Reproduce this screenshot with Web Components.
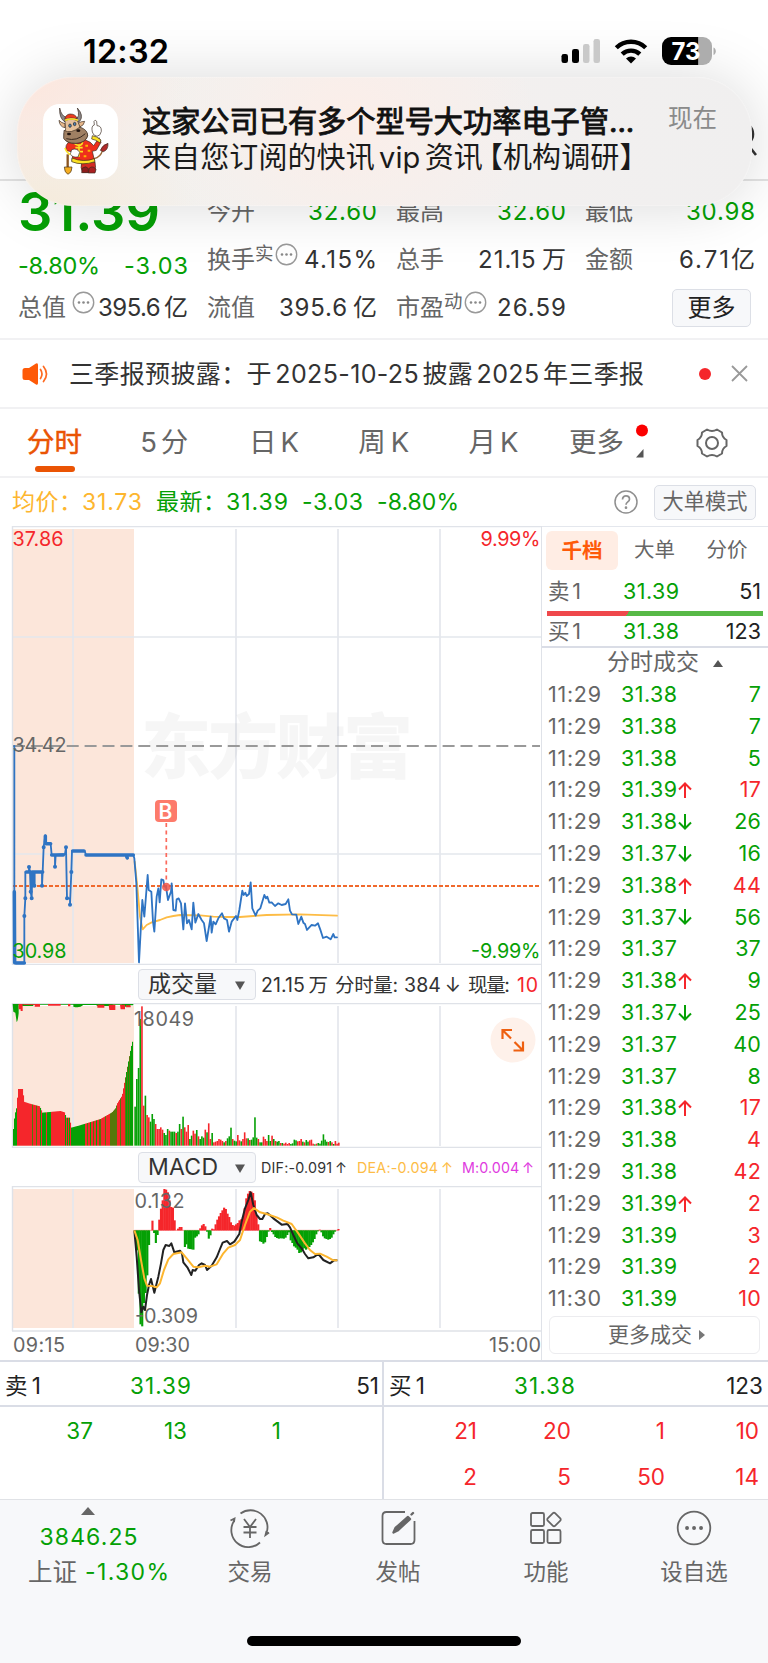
<!DOCTYPE html>
<html lang="zh-CN">
<head>
<meta charset="utf-8">
<title>分时行情</title>
<style>
  body {
    margin: 0;
    width: 768px;
    height: 1663px;
    overflow: hidden;
    background: #fff;
    color: #333;
    font-family: Inter, "Noto Sans CJK SC", sans-serif;
    line-height: 1.2;
    position: relative;
    --up: #f5262b;
    --down: #05a005;
    --gray: #666;
    --brand: #ea5404;
    --line: #e4e7ed;
  }
  .body { display: flex; height: 834px; }
  .tight { margin-left: -9px; }
</style>
</head>
<body>
  <status-bar></status-bar>
  <push-banner>
    <span slot="title">这家公司已有多个型号大功率电子管...</span>
    <span slot="text">来自您订阅的快讯 vip 资讯<span class="tight">【机构调研】</span></span>
    <span slot="time">现在</span>
  </push-banner>
  <title-bar></title-bar>
  <quote-header></quote-header>
  <notice-bar>三季报预披露：于 2025-10-25 披露 2025 年三季报</notice-bar>
  <period-tabs></period-tabs>
  <chart-legend></chart-legend>
  <div class="body">
    <chart-panel></chart-panel>
    <side-panel></side-panel>
  </div>
  <order-queue></order-queue>
  <bottom-nav></bottom-nav>

<script>
// texto que se ajusta a un ancho fijo con letter-spacing
class FitText extends HTMLElement {
  constructor() {
    super();
    this.attachShadow({ mode: 'open' });
  }

  connectedCallback() {
    const w = Number(this.getAttribute('w'));
    this.shadowRoot.innerHTML = `
      <style>
        :host { display: inline-block; width: ${w}px; white-space: nowrap; line-height: 1.2; flex: none; word-spacing: -.1em; }
        span { display: inline-block; }
      </style>
      <span><slot></slot></span>
    `;
    const span = this.shadowRoot.querySelector('span');
    const n = this.textContent.length;
    const extra = (w - span.getBoundingClientRect().width) / Math.max(1, n - 1);
    span.style.letterSpacing = extra.toFixed(3) + 'px';
    span.style.marginRight = (-extra).toFixed(3) + 'px';
  }
}
customElements.define('fit-text', FitText);

class StatusBar extends HTMLElement {
  constructor() {
    super();
    this.attachShadow({ mode: 'open' });
    this.shadowRoot.innerHTML = `
      <style>
        :host { display: flex; justify-content: space-between; align-items: center; height: 77px; padding: 25px 52px 0 83px; box-sizing: border-box; position: relative; z-index: 3; }
        fit-text { font-size: 32.5px; font-weight: 600; color: #000; }
        svg { display: block; }
      </style>
      <fit-text w="86">12:32</fit-text>
      <svg width="155" height="30" viewBox="561 36 155 30">
        <rect x="561.5" y="54" width="6.5" height="9" rx="2.3"/>
        <rect x="572" y="49" width="7" height="14" rx="2.3"/>
        <rect x="583" y="44" width="6.5" height="19" rx="2.3" fill="#c9c9c9"/>
        <rect x="593.5" y="39" width="6.5" height="24" rx="2.3" fill="#c9c9c9"/>
        <g fill="none" stroke="#000" stroke-width="4.4">
          <path d="M616.3 47.8a21 21 0 0 1 29.4 0"/>
          <path d="M622.2 54.2a12.7 12.7 0 0 1 17.6 0"/>
        </g>
        <path d="M626 58.4a7.2 7.2 0 0 1 10 0l-5 5z"/>
        <path d="M671 37h27.5v28H671a9 9 0 0 1-9-9V46a9 9 0 0 1 9-9z"/>
        <path d="M698.500 37H703a9 9 0 0 1 9 9v10a9 9 0 0 1-9 9h-4.500z" fill="#adadad"/>
        <path d="M713.500 47.500c3 1.200 3 6 0 7.500z" fill="#adadad"/>
        <text x="671.500" y="60" font-size="24" font-weight="700" fill="#fff" textLength="29" lengthAdjust="spacingAndGlyphs">73</text>
      </svg>
    `;
  }
}
customElements.define('status-bar', StatusBar);

class PushBanner extends HTMLElement {
  constructor() {
    super();
    this.attachShadow({ mode: 'open' });
    this.shadowRoot.innerHTML = `
      <style>
        :host {
          position: absolute; z-index: 2; left: 17px; top: 77px; width: 735px; height: 129px;
          box-sizing: border-box; padding: 27px 35px 0 26px; border-radius: 56px;
          display: flex; align-items: flex-start;
          background:
            radial-gradient(ellipse 170px 110px at 0 0, #fde6dd, #fde6dd00),
            radial-gradient(ellipse 150px 90px at 30px 129px, #f5ebdc, #f5ebdc00),
            radial-gradient(ellipse 190px 160px at 330px 40px, #fbeee9, #fbeee900),
            linear-gradient(90deg, #f5efea, #f2f1ef 30%, #f3f0ef 60%, #f0efef);
          box-shadow: 0 0 60px rgba(0, 0, 0, .15), inset 0 0 1px 1px rgba(255, 255, 255, .25);
        }
        svg { display: block; flex: none; }
        .lines { flex: 1; margin-left: 24px; display: flex; flex-direction: column; white-space: nowrap; color: #1a1a1a; font-size: 29px; line-height: 36px; }
        .title { font-size: 29.200px; color: #111; -webkit-text-stroke: .9px #111; }
        .text { letter-spacing: .1px; word-spacing: -4px; }
        .time { color: #8a8a8a; font-size: 24.500px; line-height: 29px; }
      </style>
      <svg width="75" height="75" viewBox="0 0 225 225">
        <rect width="225" height="225" rx="50" fill="#fff"/>
        <g stroke="#3a2a20" stroke-width="2" stroke-linejoin="round">
          <path d="M153 164q20-4 26-26" fill="none" stroke="#9a6a3a" stroke-width="4"/>
          <path d="M172 139q6-16 23-21q1 20-14 25z" fill="#b22a2a"/>
          <path d="M116 176l40-2q4 16-1 31h-36q-8-14-3-29z" fill="#d42b22"/>
          <path d="M118 192q12-8 18 2v12h-20z" fill="#8f1d1d"/>
          <path d="M139 192q12-8 20 4l-3 11h-20z" fill="#a92020"/>
          <path d="M82 112q30-16 60 3l10 10 16-24 6 14-14 24-12 3 7 30q-36 12-68-1l3-27-19-4q-8-18 11-28z" fill="#ee2f1c"/>
          <path d="M87 162q34 14 67 2l2 9q-38 13-70 0z" fill="#fbe122"/>
          <path d="M148 95q12 1 26 13l-3 9q-12-10-25-12z" fill="#fbe122"/>
          <path d="M92 114l6 7q10 6 18 0l3-7M108 121v38M97 131h22M98 143h22" fill="none" stroke="#fbe122" stroke-width="5"/>
          <path d="M127 125h8M134 140h8M94 151h7M122 157h8" fill="none" stroke="#ffb400" stroke-width="6"/>
          <path d="M74 151v38" stroke="#8a5420" stroke-width="7"/>
          <path d="M64 189h23q0 17-12 22q-11-5-11-22z" fill="#f6ae21"/>
          <path d="M86 137q16-6 24 8l-5 14q-18 2-23-9z" fill="#fff"/>
          <path d="M66 132q6 16 16 19" fill="none" stroke="#fbe122" stroke-width="5"/>
          <path d="M148 84q-4-19 6-21l-1-11q3-7 8 0l1 13q14 0 13 17q-2 13-13 15q-12-2-14-13z" fill="#fff"/>
          <path d="M66 54q-18-11-16-42q5 24 20 28z" fill="#8a8788"/>
          <path d="M96 46q17-5 7-34q20 22 8 39l-11 7z" fill="#8a8788"/>
          <path d="M66 59q-10-2-18-10q2 20 18 22zM105 58q9-6 20-6q-2 13-15 17z" fill="#e7b88b"/>
          <path d="M66 50q20-9 38 1l8 21q20 7 22 22q-3 20-31 24q-29 3-39-13q-4-16 4-30z" fill="#e6c19b"/>
          <path d="M63 79q20 12 48-10q24 9 23 27q-7 20-35 22q-27 0-37-15z" fill="#a08063"/>
          <path d="M65 46q3-15 16-16q17 0 22 14q-20-5-38 2z" fill="#ec3b1e"/>
          <path d="M66 49q19-8 39 0" fill="none" stroke="#fbe122" stroke-width="5"/>
        </g>
        <g fill="#4d7fb2" stroke="#222" stroke-width="2"><ellipse cx="81" cy="65" rx="4" ry="5"/><ellipse cx="95" cy="60" rx="4" ry="5"/></g>
        <g fill="#221510"><ellipse cx="78" cy="90" rx="6" ry="4"/><ellipse cx="106" cy="80" rx="6" ry="4"/></g>
        <path d="M70 104q31 9 57-15" fill="none" stroke="#3a2a20" stroke-width="3"/>
      </svg>
      <div class="lines">
        <div class="title"><slot name="title"></slot></div>
        <div class="text"><slot name="text"></slot></div>
      </div>
      <div class="time"><slot name="time"></slot></div>
    `;
  }
}
customElements.define('push-banner', PushBanner);

// barra superior, casi toda queda debajo del aviso
class TitleBar extends HTMLElement {
  constructor() {
    super();
    this.attachShadow({ mode: 'open' });
    this.shadowRoot.innerHTML = `
      <style>
        :host { display: flex; justify-content: flex-end; box-sizing: border-box; height: 104px; padding: 42px 10px 0 0; border-bottom: 2px solid #e3e3e3; }
      </style>
      <svg width="32" height="40" viewBox="726 119 32 40" fill="none" stroke="#333" stroke-width="2.600">
        <circle cx="741.500" cy="134" r="11.500"/><path d="M748 145l8 10"/>
      </svg>
    `;
  }
}
customElements.define('title-bar', TitleBar);

const dots = `<svg width="23" height="23" viewBox="0 0 23 23"><circle cx="11.500" cy="11.500" r="10.200" fill="none" stroke="#999" stroke-width="1.400"/><g fill="#888"><circle cx="7" cy="11.500" r="1.300"/><circle cx="11.500" cy="11.500" r="1.300"/><circle cx="16" cy="11.500" r="1.300"/></g></svg>`;

class QuoteHeader extends HTMLElement {
  constructor() {
    super();
    this.attachShadow({ mode: 'open' });
    this.shadowRoot.innerHTML = `
      <style>
        :host { display: grid; grid-template-columns: repeat(4, 170px); column-gap: 19px; padding: 8px 13px 7px 18px; height: 159px; box-sizing: border-box; grid-template-rows: repeat(3, 47.600px); font-size: 24px; border-bottom: 2px solid #f1f1f3; }
        div { display: flex; justify-content: space-between; align-items: center; }
        label { color: var(--gray); display: flex; align-items: center; }
        sup { font-size: 18.500px; line-height: 18px; margin: -14px 0 0 0; }
        svg { margin: -11px 0 0 1.500px; }
        .down { color: var(--down); }
        .price { font-size: 54px; font-weight: 600; }
        .pct { padding-top: 12px; font-size: 23.500px; }
        button { width: 79px; height: 38px; margin: 0 4px 0 auto; border: 1.500px solid #dcdfe6; border-radius: 5px; background: #f7f8fa; color: #222; font: inherit; padding: 0; }
      </style>
      <div class="price down"><fit-text w="142">31.39</fit-text></div>
      <div><label>今开</label><fit-text class="down" w="69">32.60</fit-text></div>
      <div><label>最高</label><fit-text class="down" w="69">32.60</fit-text></div>
      <div><label>最低</label><fit-text class="down" w="69">30.98</fit-text></div>
      <div class="pct down"><fit-text w="82">-8.80%</fit-text><fit-text w="64">-3.03</fit-text></div>
      <div><label>换手<sup>实</sup>${dots}</label><fit-text w="73">4.15%</fit-text></div>
      <div><label>总手</label><fit-text w="88">21.15 万</fit-text></div>
      <div><label>金额</label><fit-text w="76">6.71亿</fit-text></div>
      <div><label>总值<span style="width:4px"></span>${dots}</label><fit-text w="90">395.6 亿</fit-text></div>
      <div><label>流值</label><fit-text w="98">395.6 亿</fit-text></div>
      <div><label>市盈<sup>动</sup>${dots}</label><fit-text w="69">26.59</fit-text></div>
      <div><button>更多</button></div>
    `;
  }
}
customElements.define('quote-header', QuoteHeader);

class NoticeBar extends HTMLElement {
  constructor() {
    super();
    this.attachShadow({ mode: 'open' });
  }

  connectedCallback() {
    this.shadowRoot.innerHTML = `
      <style>
        :host { display: flex; align-items: center; height: 69px; box-sizing: border-box; padding: 0 20px 0 22px; border-bottom: 2px solid #f1f1f3; font-size: 25px; }
        .horn { margin-right: 20px; }
        fit-text { word-spacing: -4px; }
        i { width: 12px; height: 12px; border-radius: 50%; background: #f5262b; margin: 0 20px 0 auto; }
      </style>
      <svg class="horn" width="27" height="24" viewBox="0 0 27 24">
        <path d="M3 6h4l7-4.500q2-1 2 1.500v18q0 2.500-2 1.500l-7-4.500H3q-2.500 0-2.500-2.500v-7Q.5 6 3 6z" fill="#fe5a08"/>
        <path d="M18.500 7.500q3 4.500 0 9M21.500 4.500q6 7.500 0 15" fill="none" stroke="#fe6a20" stroke-width="1.700" stroke-linecap="round"/>
      </svg>
      <fit-text w="575">${this.textContent}</fit-text>
      <i></i>
      <svg width="17" height="17" viewBox="0 0 17 17" stroke="#999" stroke-width="1.800"><path d="M1 1l15 15M16 1L1 16"/></svg>
    `;
  }
}
customElements.define('notice-bar', NoticeBar);

class PeriodTabs extends HTMLElement {
  constructor() {
    super();
    this.attachShadow({ mode: 'open' });
    this.shadowRoot.innerHTML = `
      <style>
        :host { display: grid; grid-template-columns: repeat(5, 109.800px) 109px 109px; height: 69px; box-sizing: border-box; border-bottom: 2px solid #f1f1f3; font-size: 27.500px; color: var(--gray); }
        div { display: flex; align-items: center; justify-content: center; position: relative; padding-right: 1px; }
        .on { color: var(--brand); -webkit-text-stroke: .5px var(--brand); }
        .on::after { content: ""; position: absolute; left: 35px; top: 57px; width: 40px; height: 6px; border-radius: 3px; background: var(--brand); }
        .more { padding-right: 14px; }
        .more svg { position: absolute; left: 85px; top: 14px; }
      </style>
      <div class="on">分时</div>
      <div><fit-text w="48">5 分</fit-text></div>
      <div><fit-text w="50">日 K</fit-text></div>
      <div><fit-text w="51">周 K</fit-text></div>
      <div><fit-text w="50">月 K</fit-text></div>
      <div class="more">更多<svg width="16" height="36" viewBox="0 0 16 36"><circle cx="8" cy="7.500" r="6" fill="#fb0000"/><path d="M9.500 26v8.500H2z" fill="#555"/></svg></div>
      <div><svg width="34" height="32" viewBox="0 0 34 32" fill="none" stroke="#666" stroke-width="2">
        <path stroke-linejoin="round" d="M12 2.500Q17 5.500 22 2.500L27 5.500Q27 10.500 31.500 13V19Q27 21.500 27 26.500L22 29.500Q17 26.500 12 29.500L7 26.500Q7 21.500 2.500 19V13Q7 10.500 7 5.500Z"/><circle cx="17" cy="16" r="6"/>
      </svg></div>
    `;
  }
}
customElements.define('period-tabs', PeriodTabs);

class ChartLegend extends HTMLElement {
  constructor() {
    super();
    this.attachShadow({ mode: 'open' });
    this.shadowRoot.innerHTML = `
      <style>
        :host { display: flex; align-items: center; height: 48px; padding: 0 12px; font-size: 23px; color: var(--down); }
        .avg { color: #fdb62f; margin-right: 14px; }
        .avg, .v { display: flex; }
        fit-text { padding-top: 2px; }
        .g { margin-left: 14px; }
        svg { margin: 0 16px 0 auto; }
        button { width: 102px; height: 35px; border: 1.500px solid #dcdfe6; border-radius: 5px; background: #f7f8fa; color: var(--gray); font: inherit; font-size: 21.200px; padding: 0; }
      </style>
      <span class="avg"><fit-text w="70">均价：</fit-text><fit-text w="60">31.73</fit-text></span>
      <fit-text w="70">最新：</fit-text><fit-text w="62">31.39</fit-text>
      <fit-text class="g" w="61">-3.03</fit-text><fit-text class="g" w="82">-8.80%</fit-text>
      <svg width="24" height="24" viewBox="0 0 24 24" fill="none" stroke="#8f8f8f" stroke-width="1.500"><circle cx="12" cy="12" r="11"/><path d="M8.500 9.500c0-5 7-4.500 7-.3 0 2.800-3.500 2.600-3.500 5.500" stroke-width="1.700"/><circle cx="12" cy="17.700" r=".6" fill="#8f8f8f"/></svg>
      <button>大单模式</button>
    `;
  }
}
customElements.define('chart-legend', ChartLegend);

// las series estan en tercios de pixel
const price = '43,18 43,455 45,668 73,668 73,528 76,475 76,396 87,396 87,380 90,396 92,455 95,475 97,396 100,437 104,437 104,396 126,396 126,437 128,396 131,320 136,286 138,312 152,312 155,345 165,345 165,380 167,345 195,342 198,322 201,475 210,475 210,494 214,396 216,333 254,333 258,345 400,345 403,355 409,430 417,667 427,480 433,530 443,405 446,450 454,455 459,545 463,575 470,470 475,445 479,487 484,418 490,420 493,440 498,440 504,480 513,455 515,430 520,510 527,512 530,478 536,475 543,490 550,568 555,490 561,550 567,540 575,568 580,488 586,548 595,522 605,540 612,550 620,603 632,530 635,578 640,545 647,553 655,535 666,520 672,535 681,540 687,575 695,545 708,528 712,540 718,510 727,452 731,465 736,458 740,468 747,462 752,427 757,505 767,527 773,512 781,505 793,465 798,475 802,470 808,488 815,487 825,498 835,490 845,495 857,492 865,478 870,512 876,523 889,524 895,552 904,530 910,548 915,552 921,570 935,555 945,557 954,550 962,572 969,594 980,590 992,598 1000,582 1004,592 1011,592';
const average = '404,365 412,440 420,530 428,568 440,555 455,547 480,540 500,532 520,528 540,525 600,526 640,530 680,531 720,531 760,528 800,525 900,523 1011,527';
const dif = '403,241 410,320 417,420 424,487 430,470 435,480 441,435 447,405 453,387 463,428 475,380 483,340 490,300 497,285 508,288 514,280 523,307 540,302 546,310 550,337 562,352 574,375 578,360 586,362 597,345 605,340 615,345 621,360 635,347 650,322 660,297 668,278 681,273 690,283 703,275 718,252 725,215 735,175 745,150 752,127 760,165 770,195 780,207 787,207 795,192 803,190 820,205 845,224 862,222 870,232 880,255 892,280 905,295 915,312 925,325 940,322 955,312 970,330 990,340 1002,331 1012,331';
const dea = '403,241 413,270 423,330 433,385 441,407 455,408 470,412 480,400 492,360 505,328 520,312 545,307 560,325 580,350 595,352 615,347 630,350 650,343 670,310 685,293 705,285 720,270 735,225 750,185 762,174 780,187 800,192 830,202 850,212 875,222 895,250 915,280 930,300 945,312 960,311 980,320 1000,331 1012,331';
// r = sube, g = baja
const volumes = 'g117 g200 g233 g380 r418 r120 g150 r92 r85 g72 g95 g80 r65 r50 r50 r55 r48 g38 g32 g50 r45 g42 g42 g42 r38 g42 g65 r50 g87 r55 r42 r62 g20 g30 r45 r36 g47 r28 g20 g28 g24 r48 g40 r67 r20 g38 r10 r12 r14 r20 r18 r14 g10 r14 g22 g28 g54 r20 g15 g13 r32 r16 g13 r20 r40 r22 g22 r17 g18 g25 g85 g24 r20 g10 g10 r27 r20 r14 g32 g14 r30 g20 r14 g12 g14 r8 g8 r6 r9 r5 r8 g5 g7 g18 g16 r13 r14 r20 g12 r10 g17 g12 r16 r18 r6 g4 r6 g8 g6 g15 g34 g18 g12 r11 g14 r10 g5 r14 r6 r9';
const macd = [-8,-60,-190,-282,-288,-218,-188,-135,-44,0,29,-8,-38,-14,32,65,90,124,122,114,90,70,68,30,0,5,10,10,0,-50,-42,-55,-56,-57,-58,-22,-18,-12,6,15,19,12,-4,-25,-15,5,3,18,32,42,52,60,68,64,50,40,24,16,14,18,22,30,33,40,66,96,110,118,116,112,90,45,18,-33,-35,-40,-36,-20,-4,7,-5,-12,-20,-23,-25,-24,-24,-25,-22,-14,-6,-30,-38,-48,-52,-58,-68,-66,-58,-54,-58,-54,-50,-44,-36,-26,-12,-3,2,-6,-18,-24,-26,-28,-26,-22,-12,-4,0,4];
const auction = [[39,50],[43,92],[50,120],[52,168],[54,170],[68,170],[70,132],[88,126],[118,118],[126,99],[180,104],[192,100],[198,84],[208,84],[212,54],[235,60],[300,80],[335,100],[345,112],[350,126],[365,150],[375,205],[385,258],[392,295],[398,320]];

function heightAt(points, x) {
  for (let i = 1; i < points.length; i++) {
    const [x0, h0] = points[i - 1];
    const [x1, h1] = points[i];
    if (x <= x1) return h0 + (h1 - h0) * (x - x0) / (x1 - x0);
  }
  return points[points.length - 1][1];
}

function auctionBars() {
  const red = '#f5262b', green = '#05a005', olive = '#55780a';
  let out = '';
  for (let x = 39; x < 399; x += 3) {
    const k = (x / 3) | 0;
    let c = red;
    if (x < 51 || x > 390) c = green;
    else if (x > 93 && x < 99 || x > 105 && x < 109) c = olive;
    else if (x >= 120 && x < 156) c = k % 5 === 1 ? red : green;
    else if (x > 194 && x < 212) c = k % 2 ? green : red;
    else if (x >= 212 && x < 250) c = green;
    else if (x >= 250 && x < 300) c = k % 6 === 0 ? green : k % 6 === 3 ? olive : red;
    else if (x >= 330 && x < 350) c = olive;
    else if (x >= 300 && x < 375) c = k % 5 === 0 ? olive : red;
    else if (x >= 375) c = k % 2 ? olive : green;
    const h = heightAt(auction, x);
    out += `<rect x="${x}" y="${(557 - h).toFixed(1)}" width="3.2" height="${h.toFixed(1)}" fill="${c}"/>`;
  }
  return out;
}

function volumeBars() {
  return volumes.split(' ').map((v, i) => {
    const h = Number(v.slice(1));
    const x = 403 + i * 5.135;
    return `<rect x="${x.toFixed(1)}" y="${557 - h}" width="4.8" height="${h}" fill="${v[0] === 'r' ? '#f5262b' : '#05a005'}"/>`;
  }).join('');
}

function macdBars() {
  return macd.map((v, i) => {
    const x = 403 + i * 5.12;
    return `<rect x="${x.toFixed(1)}" y="${v > 0 ? 241 - v : 241}" width="6.4" height="${Math.abs(v)}" fill="${v > 0 ? '#f5262b' : '#05a005'}"/>`;
  }).join('');
}

class ChartPanel extends HTMLElement {
  constructor() {
    super();
    this.attachShadow({ mode: 'open' });
    const grid = (y1, y2) => `
      <rect x="13" y="${y1}" width="121" height="${y2 - y1}" fill="#fce6da"/>
      <path d="M73 ${y1}V${y2}M236 ${y1}V${y2}M338 ${y1}V${y2}M440 ${y1}V${y2}" stroke="#e4e7ed" stroke-width="1.700"/>`;
    this.shadowRoot.innerHTML = `
      <style>
        :host { display: flex; flex-direction: column; width: 541px; flex: none; }
        svg { display: block; flex: none; font-family: Inter, sans-serif; }
        .bar { display: flex; align-items: center; box-sizing: border-box; padding-left: 138px; font-size: 19.500px; }
        .bar > fit-text { padding-top: 3px; }
        .axis { flex: 1; display: flex; align-items: center; box-sizing: border-box; padding: 0 0 0 13px; font-size: 19.800px; color: var(--gray); }
        .sel { box-sizing: border-box; width: 118px; height: 31px; flex: none; border: 1.500px solid #dcdfe6; border-radius: 4px; background: #f7f8fa; font-size: 23px; display: flex; align-items: center; justify-content: space-between; padding: 2px 10px 0 9px; margin-right: 5px; }
        .small { font-size: 14.300px; padding-top: 1px; }
      </style>
      <svg width="541" height="439" viewBox="0 526 541 439">
        ${grid(529, 963)}
        <path d="M13 637H541M13 854H541" stroke="#e4e7ed" stroke-width="1.700"/>
        <path d="M12.500 965V526.500H541M12 964.500H541" fill="none" stroke="#e0e3e9" stroke-width="1.400"/>
        <text x="141" y="773" font-size="70" font-weight="900" fill="#808080" fill-opacity=".07" textLength="272" style="font-family:'Noto Sans CJK SC',sans-serif">东方财富</text>
        <path d="M13 746H540" stroke="#999" stroke-width="2" stroke-dasharray="12 5.900"/>
        <path d="M13 886H541" stroke="#f0692c" stroke-width="2" stroke-dasharray="4 2"/>
        <g transform="translate(0 740) scale(.33333)" fill="none" stroke-linejoin="round" stroke-linecap="round">
          <polyline points="${average}" stroke="#fdbc45" stroke-width="5.500"/>
          <polyline points="${price}" stroke="#2f74c3" stroke-width="5.500"/>
          <path d="M43 455L44 668M47 669H73M79 396H92M97 396H128M98 400V437M136 288V306M138 311H152M155 345H190M218 333H252M258 345H400M380 350L382 354" stroke="#2f74c3" stroke-width="10.500"/>
          <path d="M73 528h.1M76 475h.1M87 381h.1M92 455h.1M95 475h.1M103 437h.1M126 437h.1M131 322h.1M165 380h.1M198 322h.1M201 475h.1M210 494h.1M214 396h.1" stroke="#2f74c3" stroke-width="12"/>
        </g>
        <path d="M166.300 823V882" stroke="#fb6a5c" stroke-width="1.700" stroke-dasharray="4 3.500"/>
        <circle cx="166.300" cy="887" r="4.300" fill="#f05347" fill-opacity=".85"/>
        <rect x="155" y="800" width="22" height="22" rx="4" fill="#fd7b6b"/>
        <text x="158.500" y="819" font-size="21" font-weight="600" fill="#fff">B</text>
        <g font-size="19.800">
          <text x="12.500" y="546" fill="#f5262b" textLength="51">37.86</text>
          <text x="480.500" y="546" fill="#f5262b" textLength="60">9.99%</text>
          <text x="12.500" y="751.500" fill="#666" textLength="54">34.42</text>
          <text x="12.500" y="957.500" fill="#05a005" textLength="54">30.98</text>
          <text x="471" y="957.500" fill="#05a005" textLength="69.500">-9.99%</text>
        </g>
      </svg>
      <div class="bar" style="height:38px">
        <div class="sel"><fit-text w="69">成交量</fit-text><svg width="10" height="9"><path d="M0 .5h10L5 9z" fill="#555"/></svg></div>
        <fit-text w="67">21.15 万</fit-text><fit-text w="63" style="margin-left:7px">分时量:</fit-text><fit-text w="57" style="margin-left:6px">384 ↓</fit-text><fit-text w="42" style="margin-left:7px">现量:</fit-text><fit-text w="21" style="margin-left:7px;color:var(--up)">10</fit-text>
      </div>
      <svg width="541" height="145" viewBox="0 1003 541 145">
        ${grid(1006, 1146)}
        <path d="M12.500 1148V1003.500H541M12 1147.500H541" fill="none" stroke="#dfe2e8" stroke-width="1.400"/>
        <g transform="translate(0 960) scale(.33333)">
          ${auctionBars()}
          ${volumeBars()}
          <path d="M38 132H400V136H390V140H365V134H338V138H290V135H250Q238 146 220 140V134H100V138H66V134H56V160Q53 186 50 186L46 158L40 155Z" fill="#05a005"/>
          <path d="M56 132H68V153H62V148H56ZM70 132H120V140H104V134H70ZM144 132H182V137H144ZM204 132H211V139H204ZM292 134H313V143H292ZM326 134H346V150H328ZM360 134H375V148H362ZM378 136H392V142H378Z" fill="#f5262b"/>
        </g>
        <text x="134" y="1025.500" font-size="19.800" fill="#666" textLength="60">18049</text>
        <circle cx="513" cy="1040" r="22.500" fill="#fef1ea"/>
        <path d="M502.500 1039V1030H512M503 1030.500L511 1038.500M523 1041.500V1050.500H513.500M522.500 1050L514.500 1042" fill="none" stroke="#ee6010" stroke-width="2.200"/>
      </svg>
      <div class="bar" style="height:38px">
        <div class="sel"><fit-text w="70">MACD</fit-text><svg width="10" height="9"><path d="M0 .5h10L5 9z" fill="#555"/></svg></div>
        <span class="small"><fit-text w="86">DIF:-0.091 ↑</fit-text><fit-text w="96" style="margin-left:10px;color:#fdbc45">DEA:-0.094 ↑</fit-text><fit-text w="72" style="margin-left:9px;color:#e03ae0">M:0.004 ↑</fit-text></span>
      </div>
      <svg width="541" height="146" viewBox="0 1186 541 146">
        ${grid(1189, 1328)}
        <path d="M12.500 1331V1186.500H541M12 1331H541" fill="none" stroke="#dfe2e8" stroke-width="1.400"/>
        <g transform="translate(0 1150) scale(.33333)" fill="none" stroke-linejoin="round">
          <path d="M403 241H1016" stroke="#f5262b" stroke-width="1.500"/>
          ${macdBars()}
        </g>
        <g font-size="19.800" fill="#666">
          <text x="134.500" y="1208" textLength="50">0.132</text>
          <text x="135" y="1322.500" textLength="63">-0.309</text>
        </g>
        <g transform="translate(0 1150) scale(.33333)" fill="none" stroke-linejoin="round">
          <polyline points="${dif}" stroke="#222" stroke-width="6"/>
          <polyline points="${dea}" stroke="#fdb62f" stroke-width="6"/>
        </g>
      </svg>
      <div class="axis"><fit-text w="52">09:15</fit-text><fit-text w="55" style="margin-left:70px">09:30</fit-text><fit-text w="52" style="margin-left:auto">15:00</fit-text></div>
    `;
  }
}
customElements.define('chart-panel', ChartPanel);

class SidePanel extends HTMLElement {
  constructor() {
    super();
    this.attachShadow({ mode: 'open' });
    // hora, precio, flecha, cantidad, color
    const trades = [
      ['11:29', '31.38', '', 7, 'down'], ['11:29', '31.38', '', 7, 'down'],
      ['11:29', '31.38', '', 5, 'down'], ['11:29', '31.39', '↑', 17, 'up'],
      ['11:29', '31.38', '↓', 26, 'down'], ['11:29', '31.37', '↓', 16, 'down'],
      ['11:29', '31.38', '↑', 44, 'up'], ['11:29', '31.37', '↓', 56, 'down'],
      ['11:29', '31.37', '', 37, 'down'], ['11:29', '31.38', '↑', 9, 'down'],
      ['11:29', '31.37', '↓', 25, 'down'], ['11:29', '31.37', '', 40, 'down'],
      ['11:29', '31.37', '', 8, 'down'], ['11:29', '31.38', '↑', 17, 'up'],
      ['11:29', '31.38', '', 4, 'up'], ['11:29', '31.38', '', 42, 'up'],
      ['11:29', '31.39', '↑', 2, 'up'], ['11:29', '31.39', '', 3, 'up'],
      ['11:29', '31.39', '', 2, 'up'], ['11:30', '31.39', '', 10, 'up']
    ];
    const arrow = a => a === '↑'
      ? '<svg width="14" height="16" viewBox="0 0 14 16" stroke="#f5262b"><path d="M7 16V2M1 7.500L7 1.500L13 7.500"/></svg>'
      : a ? '<svg width="14" height="16" viewBox="0 0 14 16" stroke="#05a005"><path d="M7 0V14M1 8.500L7 14.500L13 8.500"/></svg>' : '';
    this.shadowRoot.innerHTML = `
      <style>
        :host { flex: 1; min-width: 0; display: flex; flex-direction: column; box-sizing: border-box; border-left: 1.500px solid #dfe2e8; font-size: 21.500px; color: var(--gray); }
        .tabs { display: grid; grid-template-columns: 72px 73px 72px; align-items: center; justify-items: center; height: 48px; padding-left: 4px; font-size: 20.500px; border-top: 1px solid var(--line); box-sizing: border-box; }
        .tabs b { width: 72px; height: 39px; line-height: 39px; text-align: center; border-radius: 6px; background: #ffede4; color: #fe5a08; }
        .row { display: grid; grid-template-columns: 75px 1fr auto; align-items: center; padding: 0 7px 0 6px; height: 36.500px; box-sizing: border-box; }
        .buy { height: 30px; padding-top: 3px; }
        .qty { color: #222; }
        .down { color: var(--down); }
        .up { color: var(--up); }
        .ratio { height: 5px; margin: 0 5px 0 5px; background: linear-gradient(120deg, #ef484b 37.500%, #57b947 37.500%); }
        .title { display: flex; align-items: center; justify-content: center; gap: 14px; height: 33.500px; border-top: 2px solid #dadde6; box-sizing: border-box; font-size: 23px; padding-left: 22px; padding-right: 2px; }
        .trade { display: grid; grid-template-columns: 73px 1fr auto; align-items: center; height: 31.800px; padding: 0 7px 0 6px; }
        .p { display: flex; align-items: center; gap: 1px; color: var(--down); }
        .trade svg { fill: none; stroke-width: 2; }
        .n { letter-spacing: .2px; }
        .more { margin: 1px 8px 0 7px; height: 38px; box-sizing: border-box; border: 1.500px solid #ececef; border-radius: 6px; display: flex; align-items: center; justify-content: center; gap: 7px; font-size: 21px; padding-left: 4px; }
      </style>
      <div class="tabs"><b>千档</b><span>大单</span><span>分价</span></div>
      <div class="row"><fit-text w="33">卖 1</fit-text><fit-text class="down" w="56">31.39</fit-text><span class="qty">51</span></div>
      <div class="ratio"></div>
      <div class="row buy"><fit-text w="33">买 1</fit-text><fit-text class="down" w="56">31.38</fit-text><span class="qty">123</span></div>
      <div class="title"><span>分时成交</span><svg width="10" height="7"><path d="M0 7h10L5 0z" fill="#555"/></svg></div>
      ${trades.map(t => `
        <div class="trade">
          <fit-text w="53">${t[0]}</fit-text>
          <span class="p"><fit-text w="56">${t[1]}</fit-text>${arrow(t[2])}</span>
          <span class="n ${t[4]}">${t[3]}</span>
        </div>`).join('')}
      <div class="more">更多成交<svg width="6" height="10"><path d="M0 0v10L6 5z" fill="#777"/></svg></div>
    `;
  }
}
customElements.define('side-panel', SidePanel);

class OrderQueue extends HTMLElement {
  constructor() {
    super();
    this.attachShadow({ mode: 'open' });
    const side = (name, price, qty, list, cls) => `
      <div class="side">
        <div class="head"><fit-text w="36">${name}</fit-text><fit-text class="down" w="61">${price}</fit-text><span>${qty}</span></div>
        <div class="list ${cls}">${list.map(n => `<span>${n}</span>`).join('')}</div>
      </div>`;
    this.shadowRoot.innerHTML = `
      <style>
        :host { display: flex; height: 139px; box-sizing: border-box; border-top: 2px solid #dadde6; font-size: 22.500px; color: #222; }
        .side { width: 382px; box-sizing: border-box; }
        .side + .side { border-left: 2px solid #dadde6; width: 386px; }
        .head { display: grid; grid-template-columns: 125px 1fr auto; align-items: center; height: 45px; padding: 3px 3px 0 5px; box-sizing: border-box; border-bottom: 2px solid #dadde6; }
        .side + .side .head { padding-right: 5px; }
        .list { display: grid; grid-template-columns: 93px repeat(3, 94px); grid-auto-rows: 46px; align-items: center; text-align: right; }
        .down { color: var(--down); }
        .up { color: var(--up); }
      </style>
      ${side('卖 1', '31.39', 51, [37, 13, 1], 'down')}
      ${side('买 1', '31.38', 123, [21, 20, 1, 10, 2, 5, 50, 14], 'up')}
    `;
  }
}
customElements.define('order-queue', OrderQueue);

class NavItem extends HTMLElement {
  constructor() {
    super();
    this.attachShadow({ mode: 'open' });
    this.shadowRoot.innerHTML = `
      <style>
        :host { display: flex; flex-direction: column; align-items: center; width: 148px; padding-top: 8px; box-sizing: border-box; color: var(--gray); font-size: 22.500px; }
        ::slotted(svg) { width: 42px; height: 40px; fill: none; stroke: #666; stroke-width: 1.800; }
        .label { margin-top: 10px; line-height: 28px; }
      </style>
      <slot name="icon"></slot>
      <span class="label"><slot></slot></span>
    `;
  }
}
customElements.define('nav-item', NavItem);

class BottomNav extends HTMLElement {
  constructor() {
    super();
    this.attachShadow({ mode: 'open' });
    this.shadowRoot.innerHTML = `
      <style>
        :host { display: flex; flex-direction: column; align-items: center; height: 164px; box-sizing: border-box; border-top: 1.500px solid #e0e2e6; background: #f7f8fa; }
        .items { display: flex; width: 768px; height: 135px; }
        .index { width: 176px; display: flex; flex-direction: column; align-items: center; padding-top: 7px; box-sizing: border-box; font-size: 23px; color: var(--down); }
        .index div { height: 35px; display: flex; align-items: center; padding-left: 21px; gap: 8px; }
        .index .v { padding: 0 0 0 1px; height: 34px; margin-top: 6px; }
        label { color: var(--gray); font-size: 24.500px; }
        i { width: 274px; height: 10px; border-radius: 5px; background: #000; margin-top: .500px; }
      </style>
      <div class="items">
        <div class="index">
          <svg width="14" height="8"><path d="M0 8h14L7 0z" fill="#666"/></svg>
          <div class="v"><fit-text w="98">3846.25</fit-text></div>
          <div><label>上证</label><fit-text w="84">-1.30%</fit-text></div>
        </div>
        <nav-item><svg slot="icon" viewBox="0 0 42 40">
          <path d="M11.500 5.500A17 17 0 0 1 37.500 25M31 34.500A17 17 0 0 1 5 13M1.500 12.500L5.500 10.500L5 14M40 24.500L36.500 27L37.500 23"/>
          <path d="M15 11l6 8 6-8M21 19v11M14.500 19h13M14.500 24.500h13"/></svg>交易</nav-item>
        <nav-item><svg slot="icon" viewBox="0 0 42 40">
          <path d="M28 4H9.500q-4 0-4 4v24q0 4 4 4h24q4 0 4-4V13"/>
          <path d="M16.500 24.500l2-4.500L31 9l2 2L20.500 22.500zM34.500 6.500l1.500-1.500" stroke-width="2.400" fill="#666" stroke-linecap="round" stroke-linejoin="round"/></svg>发帖</nav-item>
        <nav-item><svg slot="icon" viewBox="0 0 42 40">
          <rect x="6" y="5" width="13" height="13" rx="1.500"/><rect x="6" y="22" width="13" height="13" rx="1.500"/><rect x="22.500" y="22" width="13" height="13" rx="1.500"/>
          <rect x="-5.200" y="-5.200" width="10.400" height="10.400" rx="1.500" transform="translate(29 11.500) rotate(45)"/></svg>功能</nav-item>
        <nav-item><svg slot="icon" viewBox="0 0 42 40"><circle cx="21" cy="20" r="16.300"/><path d="M14 20h.1M21 20h.1M28 20h.1" stroke-width="3.800" stroke-linecap="round"/></svg>设自选</nav-item>
      </div>
      <i></i>
    `;
  }
}
customElements.define('bottom-nav', BottomNav);
</script>
</body>
</html>
